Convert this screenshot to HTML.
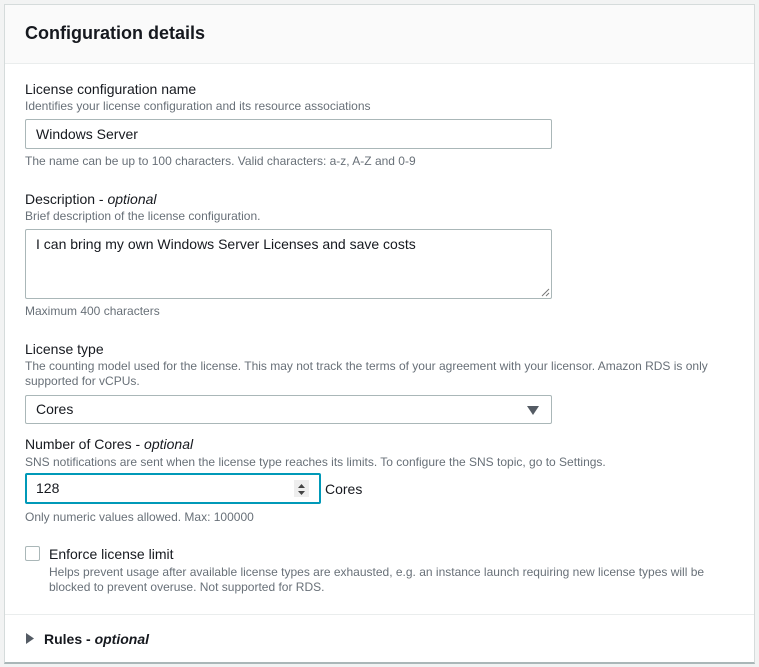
<!DOCTYPE html>
<html><head><style>
body{margin:0;width:759px;height:667px;background:#f2f3f3;font-family:"Liberation Sans",sans-serif;color:#16191f;position:relative;overflow:hidden}
.panel{position:absolute;left:4px;top:4px;width:751px;height:660px;background:#fff;border:1px solid #d5dbdb;border-bottom:2px solid #aab7b8;box-sizing:border-box}
.hdr{position:absolute;left:0;top:0;right:0;height:58px;background:#fafafa;border-bottom:1px solid #eaeded}
.a{position:absolute;white-space:nowrap}
.h{font-size:18px;font-weight:bold;left:20px;top:18px}
.l{font-size:14px;left:20px}
.d{font-size:12px;color:#687078;left:20px}
.box{position:absolute;border:1px solid #aab7b8;border-radius:2px;box-sizing:border-box;background:#fff;font-size:14px;padding-left:10px}
i{font-style:italic}
</style></head><body>
<div class="panel">
<div class="hdr"></div>
<div class="a h">Configuration details</div>
<div class="a l" style="top:76px">License configuration name</div>
<div class="a d" style="top:94px">Identifies your license configuration and its resource associations</div>
<div class="box" style="left:20px;top:114px;width:527px;height:30px;line-height:28px">Windows Server</div>
<div class="a d" style="top:149px">The name can be up to 100 characters. Valid characters: a-z, A-Z and 0-9</div>
<div class="a l" style="top:186px">Description - <i>optional</i></div>
<div class="a d" style="top:204px">Brief description of the license configuration.</div>
<div class="box" style="left:20px;top:224px;width:527px;height:70px;padding-top:6px">I can bring my own Windows Server Licenses and save costs
<svg style="position:absolute;right:1px;bottom:1px" width="9" height="9"><path d="M8 1L1 8M8 5L5 8" stroke="#777" stroke-width="1"/></svg></div>
<div class="a d" style="top:299px">Maximum 400 characters</div>
<div class="a l" style="top:336px">License type</div>
<div class="a d" style="top:354px;line-height:15px">The counting model used for the license. This may not track the terms of your agreement with your licensor. Amazon RDS is only<br>supported for vCPUs.</div>
<div class="box" style="left:20px;top:390px;width:527px;height:29px;line-height:27px">Cores
<svg style="position:absolute;right:12px;top:10px" width="12" height="9"><path d="M0 0H12L6 9Z" fill="#545b64"/></svg></div>
<div class="a l" style="top:431px">Number of Cores - <i>optional</i></div>
<div class="a d" style="top:450px">SNS notifications are sent when the license type reaches its limits. To configure the SNS topic, go to Settings.</div>
<div class="box" style="left:20px;top:468px;width:296px;height:31px;line-height:27px;border:2px solid #0099b8;padding-left:9px">128
<div style="position:absolute;right:10px;top:5px;width:15px;height:17px;background:#eee"><svg width="15" height="17"><path d="M4 7L7.5 3L11 7ZM4 10L7.5 14L11 10Z" fill="#444"/></svg></div></div>
<div class="a l" style="left:320px;top:476px">Cores</div>
<div class="a d" style="top:505px">Only numeric values allowed. Max: 100000</div>
<div style="position:absolute;left:20px;top:541px;width:13px;height:13px;border:1px solid #aab7b8;border-radius:2px"></div>
<div class="a l" style="left:44px;top:541px">Enforce license limit</div>
<div class="a d" style="left:44px;top:560px;line-height:15px">Helps prevent usage after available license types are exhausted, e.g. an instance launch requiring new license types will be<br>blocked to prevent overuse. Not supported for RDS.</div>
<div style="position:absolute;left:0;right:0;top:609px;border-top:1px solid #eaeded"></div>
<svg style="position:absolute;left:21px;top:628px" width="9" height="11"><path d="M0 0L8 5.5L0 11Z" fill="#545b64"/></svg>
<div class="a l" style="left:39px;top:626px;font-weight:bold">Rules - <i>optional</i></div>
</div>
</body></html>
